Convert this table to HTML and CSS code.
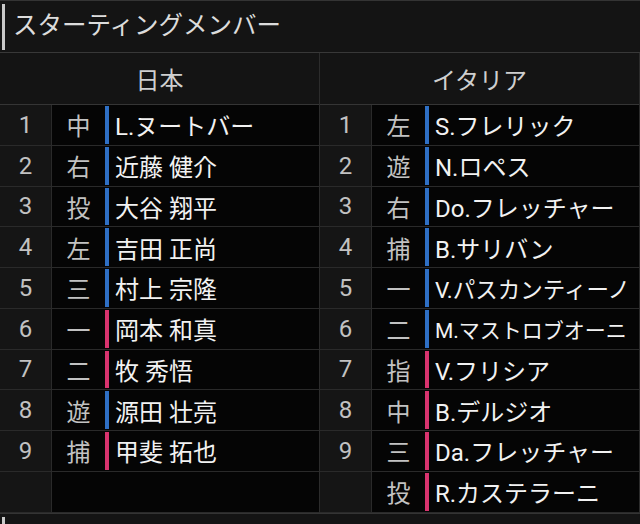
FILE: index.html
```html
<!DOCTYPE html>
<html lang="ja">
<head>
<meta charset="utf-8">
<link rel="stylesheet" href="styles.css">
</head>
<body>
<div class="section-title"><span class="bar"></span><span class="title-text">スターティングメンバー</span></div>
<div class="teams">
  <div class="team">
    <div class="team-head">日本</div>
    <div class="row"><div class="num">1</div><div class="pos">中</div><div class="name blue">L.ヌートバー</div></div>
    <div class="row"><div class="num">2</div><div class="pos">右</div><div class="name blue">近藤 健介</div></div>
    <div class="row"><div class="num">3</div><div class="pos">投</div><div class="name blue">大谷 翔平</div></div>
    <div class="row"><div class="num">4</div><div class="pos">左</div><div class="name blue">吉田 正尚</div></div>
    <div class="row"><div class="num">5</div><div class="pos">三</div><div class="name blue">村上 宗隆</div></div>
    <div class="row"><div class="num">6</div><div class="pos">一</div><div class="name pink">岡本 和真</div></div>
    <div class="row"><div class="num">7</div><div class="pos">二</div><div class="name pink">牧 秀悟</div></div>
    <div class="row"><div class="num">8</div><div class="pos">遊</div><div class="name blue">源田 壮亮</div></div>
    <div class="row"><div class="num">9</div><div class="pos">捕</div><div class="name pink">甲斐 拓也</div></div>
    <div class="row"><div class="num"></div><div class="pos"></div><div class="name none"></div></div>
  </div>
  <div class="team">
    <div class="team-head">イタリア</div>
    <div class="row"><div class="num">1</div><div class="pos">左</div><div class="name blue">S.フレリック</div></div>
    <div class="row"><div class="num">2</div><div class="pos">遊</div><div class="name blue">N.ロペス</div></div>
    <div class="row"><div class="num">3</div><div class="pos">右</div><div class="name blue">Do.フレッチャー</div></div>
    <div class="row"><div class="num">4</div><div class="pos">捕</div><div class="name blue">B.サリバン</div></div>
    <div class="row"><div class="num">5</div><div class="pos">一</div><div class="name blue fit-md">V.パスカンティーノ</div></div>
    <div class="row"><div class="num">6</div><div class="pos">二</div><div class="name blue fit-sm">M.マストロブオーニ</div></div>
    <div class="row"><div class="num">7</div><div class="pos">指</div><div class="name pink">V.フリシア</div></div>
    <div class="row"><div class="num">8</div><div class="pos">中</div><div class="name pink">B.デルジオ</div></div>
    <div class="row"><div class="num">9</div><div class="pos">三</div><div class="name pink">Da.フレッチャー</div></div>
    <div class="row"><div class="num"></div><div class="pos">投</div><div class="name pink">R.カステラーニ</div></div>
  </div>
</div>
<div class="section-title next"><span class="bar"></span></div>
</body>
</html>
```
FILE: styles.css
```css
html, body {
  margin: 0;
  padding: 0;
  background: #0a0a0a;
  width: 640px;
  height: 524px;
  overflow: hidden;
  font-family: Roboto, "Noto Sans CJK JP", sans-serif;
}

.section-title {
  box-sizing: border-box;
  height: 53px;
  border-top: 1px solid #343434;
  border-bottom: 1px solid #383838;
  background: #141414;
  display: flex;
  align-items: center;
  padding-left: 2px;
}

.section-title .bar {
  width: 3px;
  height: 46px;
  background: #c9c9c9;
  flex: none;
}

.title-text {
  margin-left: 8px;
  font-size: 24.5px;
  color: #dcdcdc;
  line-height: 1;
}

.section-title.next {
  align-items: flex-start;
  padding-top: 3px;
}

.teams {
  display: grid;
  grid-template-columns: 320px 320px;
}

.team {
  border-right: 1px solid #2c2c2c;
  box-sizing: border-box;
}

.team-head {
  box-sizing: border-box;
  height: 52px;
  background: #141414;
  border-bottom: 1px solid #353535;
  color: #cfcfcf;
  font-size: 24px;
  display: flex;
  align-items: center;
  justify-content: center;
}

.row {
  box-sizing: border-box;
  height: 40.75px;
  border-bottom: 1px solid #2a2a2a;
  display: grid;
  grid-template-columns: 52px 53px 1fr;
  background: #050505;
}

.num {
  background: #151515;
  border-right: 1px solid #2a2a2a;
  color: #c2c2c2;
  font-size: 24px;
  display: flex;
  align-items: center;
  justify-content: center;
}

.pos {
  color: #c2c2c2;
  font-size: 24px;
  display: flex;
  align-items: center;
  justify-content: center;
}

.name {
  border-left: 4px solid transparent;
  padding-left: 6px;
  color: #f2f2f2;
  font-size: 24px;
  display: flex;
  align-items: center;
  white-space: nowrap;
  overflow: hidden;
  margin: 1px 0;
}

.name.blue { border-left-color: #2e6fc4; }
.name.pink { border-left-color: #d8336e; }
.name.none { border-left-color: transparent; }

.fit-md { font-size: 22.5px; }
.fit-sm { font-size: 21px; }
```
